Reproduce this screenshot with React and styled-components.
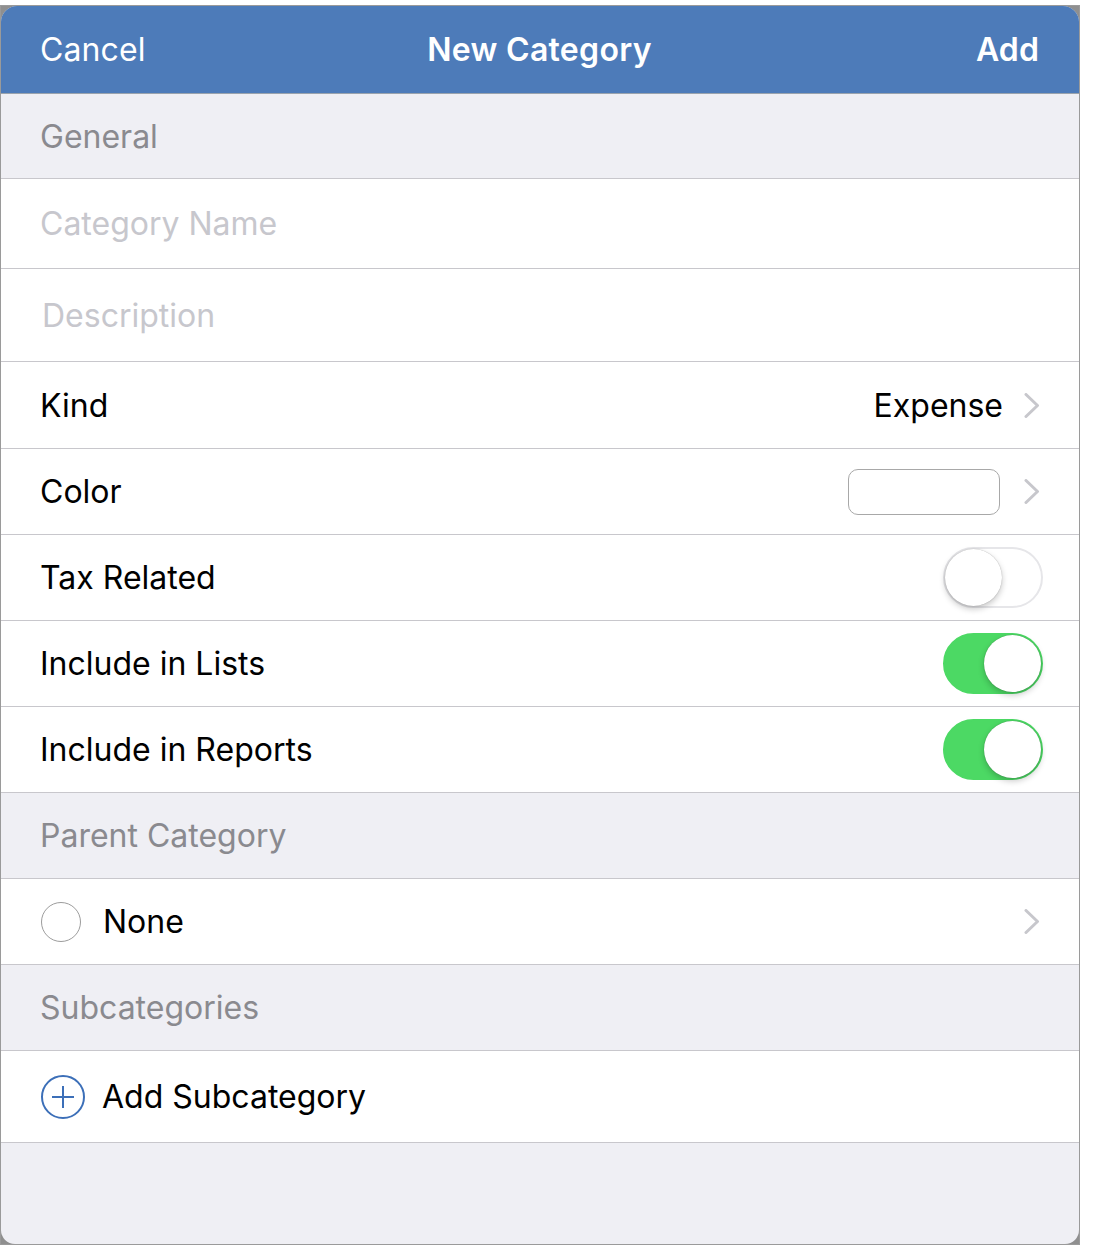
import React from "react";
import styled, { createGlobalStyle } from "styled-components";

const Global = createGlobalStyle`
  html, body { margin: 0; padding: 0; background: #ffffff; }
  body { font-family: Inter, "Open Sans", "Liberation Sans", sans-serif; -webkit-font-smoothing: antialiased; }
`;

const Frame = styled.div`
  margin-top: 5px;
  width: 1078px;
  height: 1238px;
  border: 1px solid #9a9a9a;
  background: #8f8f8f;
`;

const Sheet = styled.div`
  height: 100%;
  background: #efeff4;
  border-radius: 16px 16px 14px 14px;
  overflow: hidden;
  display: flex;
  flex-direction: column;
`;

const NavBar = styled.header`
  height: 87px;
  flex: none;
  background: #4d7bb9;
  border-bottom: 1px solid #9aa3ad;
  display: grid;
  grid-template-columns: 1fr auto 1fr;
  align-items: center;
  padding: 0 40px 0 39px;
  color: #ffffff;
  font-size: 32px;
`;

const NavButton = styled.span`
  justify-self: ${(p) => (p.$right ? "end" : "start")};
  font-weight: ${(p) => (p.$bold ? 600 : 400)};
  letter-spacing: 0.1px;
`;

const NavTitle = styled.span`
  font-weight: 600;
  letter-spacing: 0.3px;
`;

const SectionHeader = styled.div`
  height: ${(p) => p.$h}px;
  flex: none;
  display: flex;
  align-items: center;
  padding-left: 39px;
  font-size: 32px;
  color: #8a8a8f;
  border-bottom: 1px solid #c8c7cc;
`;

const Row = styled.div`
  height: ${(p) => p.$h}px;
  flex: none;
  background: #ffffff;
  border-bottom: 1px solid #c8c7cc;
  display: flex;
  align-items: center;
  padding: 0 39px 0 39px;
  font-size: 32px;
  color: #000000;
  gap: ${(p) => p.$gap || 0}px;
`;

const Placeholder = styled.span`
  color: #c7c7cd;
  margin-left: ${(p) => p.$ml || 0}px;
`;

const Label = styled.span`
  flex: 1;
`;

const Value = styled.span`
  margin-right: 21px;
`;

const Swatch = styled.div`
  width: 150px;
  height: 44px;
  border: 1.5px solid #a8a8a8;
  border-radius: 10px;
  background: #ffffff;
  margin-right: 24px;
`;

const Toggle = styled.div`
  position: relative;
  width: 100px;
  height: 61px;
  box-sizing: border-box;
  border-radius: 31px;
  margin-right: -3px;
  background: ${(p) => (p.$on ? "#4cd964" : "#ffffff")};
  border: 2px solid ${(p) => (p.$on ? "#4cd964" : "#e6e6e9")};
`;

const Knob = styled.div`
  position: absolute;
  top: 0;
  left: ${(p) => (p.$on ? "39px" : "0px")};
  width: 57px;
  height: 57px;
  border-radius: 50%;
  background: #ffffff;
  box-shadow: 0 3px 6px rgba(0, 0, 0, 0.22), 0 0 1px rgba(0, 0, 0, 0.35);
`;

const Radio = styled.div`
  width: 40px;
  height: 40px;
  border-radius: 50%;
  border: 1px solid #9c9c9c;
  box-sizing: border-box;
  flex: none;
  margin-left: 1px;
`;

const Rest = styled.div`
  flex: 1;
`;

const Chevron = () => (
  <svg width="16" height="25" viewBox="0 0 16 25" style={{ flex: "none" }}>
    <polyline points="2,1.5 13.5,12.5 2,23.5" fill="none" stroke="#c7c7cc" strokeWidth="3" strokeLinecap="round" strokeLinejoin="round" />
  </svg>
);

const PlusCircle = () => (
  <svg width="46" height="46" viewBox="0 0 46 46" style={{ flex: "none" }}>
    <circle cx="23" cy="23" r="21" fill="none" stroke="#3c6fb8" strokeWidth="2" />
    <line x1="12" y1="23" x2="34" y2="23" stroke="#3c6fb8" strokeWidth="2" />
    <line x1="23" y1="12" x2="23" y2="34" stroke="#3c6fb8" strokeWidth="2" />
  </svg>
);

export default function App() {
  return (
    <>
      <Global />
      <Frame>
        <Sheet>
          <NavBar>
            <NavButton>Cancel</NavButton>
            <NavTitle>New Category</NavTitle>
            <NavButton $right $bold>Add</NavButton>
          </NavBar>
          <SectionHeader $h={84}>General</SectionHeader>
          <Row $h={89}><Placeholder>Category Name</Placeholder></Row>
          <Row $h={92}><Placeholder $ml={2}>Description</Placeholder></Row>
          <Row $h={86}>
            <Label>Kind</Label>
            <Value>Expense</Value>
            <Chevron />
          </Row>
          <Row $h={85}>
            <Label>Color</Label>
            <Swatch />
            <Chevron />
          </Row>
          <Row $h={85}>
            <Label>Tax Related</Label>
            <Toggle><Knob /></Toggle>
          </Row>
          <Row $h={85}>
            <Label>Include in Lists</Label>
            <Toggle $on><Knob $on /></Toggle>
          </Row>
          <Row $h={85}>
            <Label>Include in Reports</Label>
            <Toggle $on><Knob $on /></Toggle>
          </Row>
          <SectionHeader $h={85}>Parent Category</SectionHeader>
          <Row $h={85} $gap={22}>
            <Radio />
            <Label>None</Label>
            <Chevron />
          </Row>
          <SectionHeader $h={85}>Subcategories</SectionHeader>
          <Row $h={91} $gap={16}>
            <PlusCircle />
            <Label>Add Subcategory</Label>
          </Row>
          <Rest />
        </Sheet>
      </Frame>
    </>
  );
}
